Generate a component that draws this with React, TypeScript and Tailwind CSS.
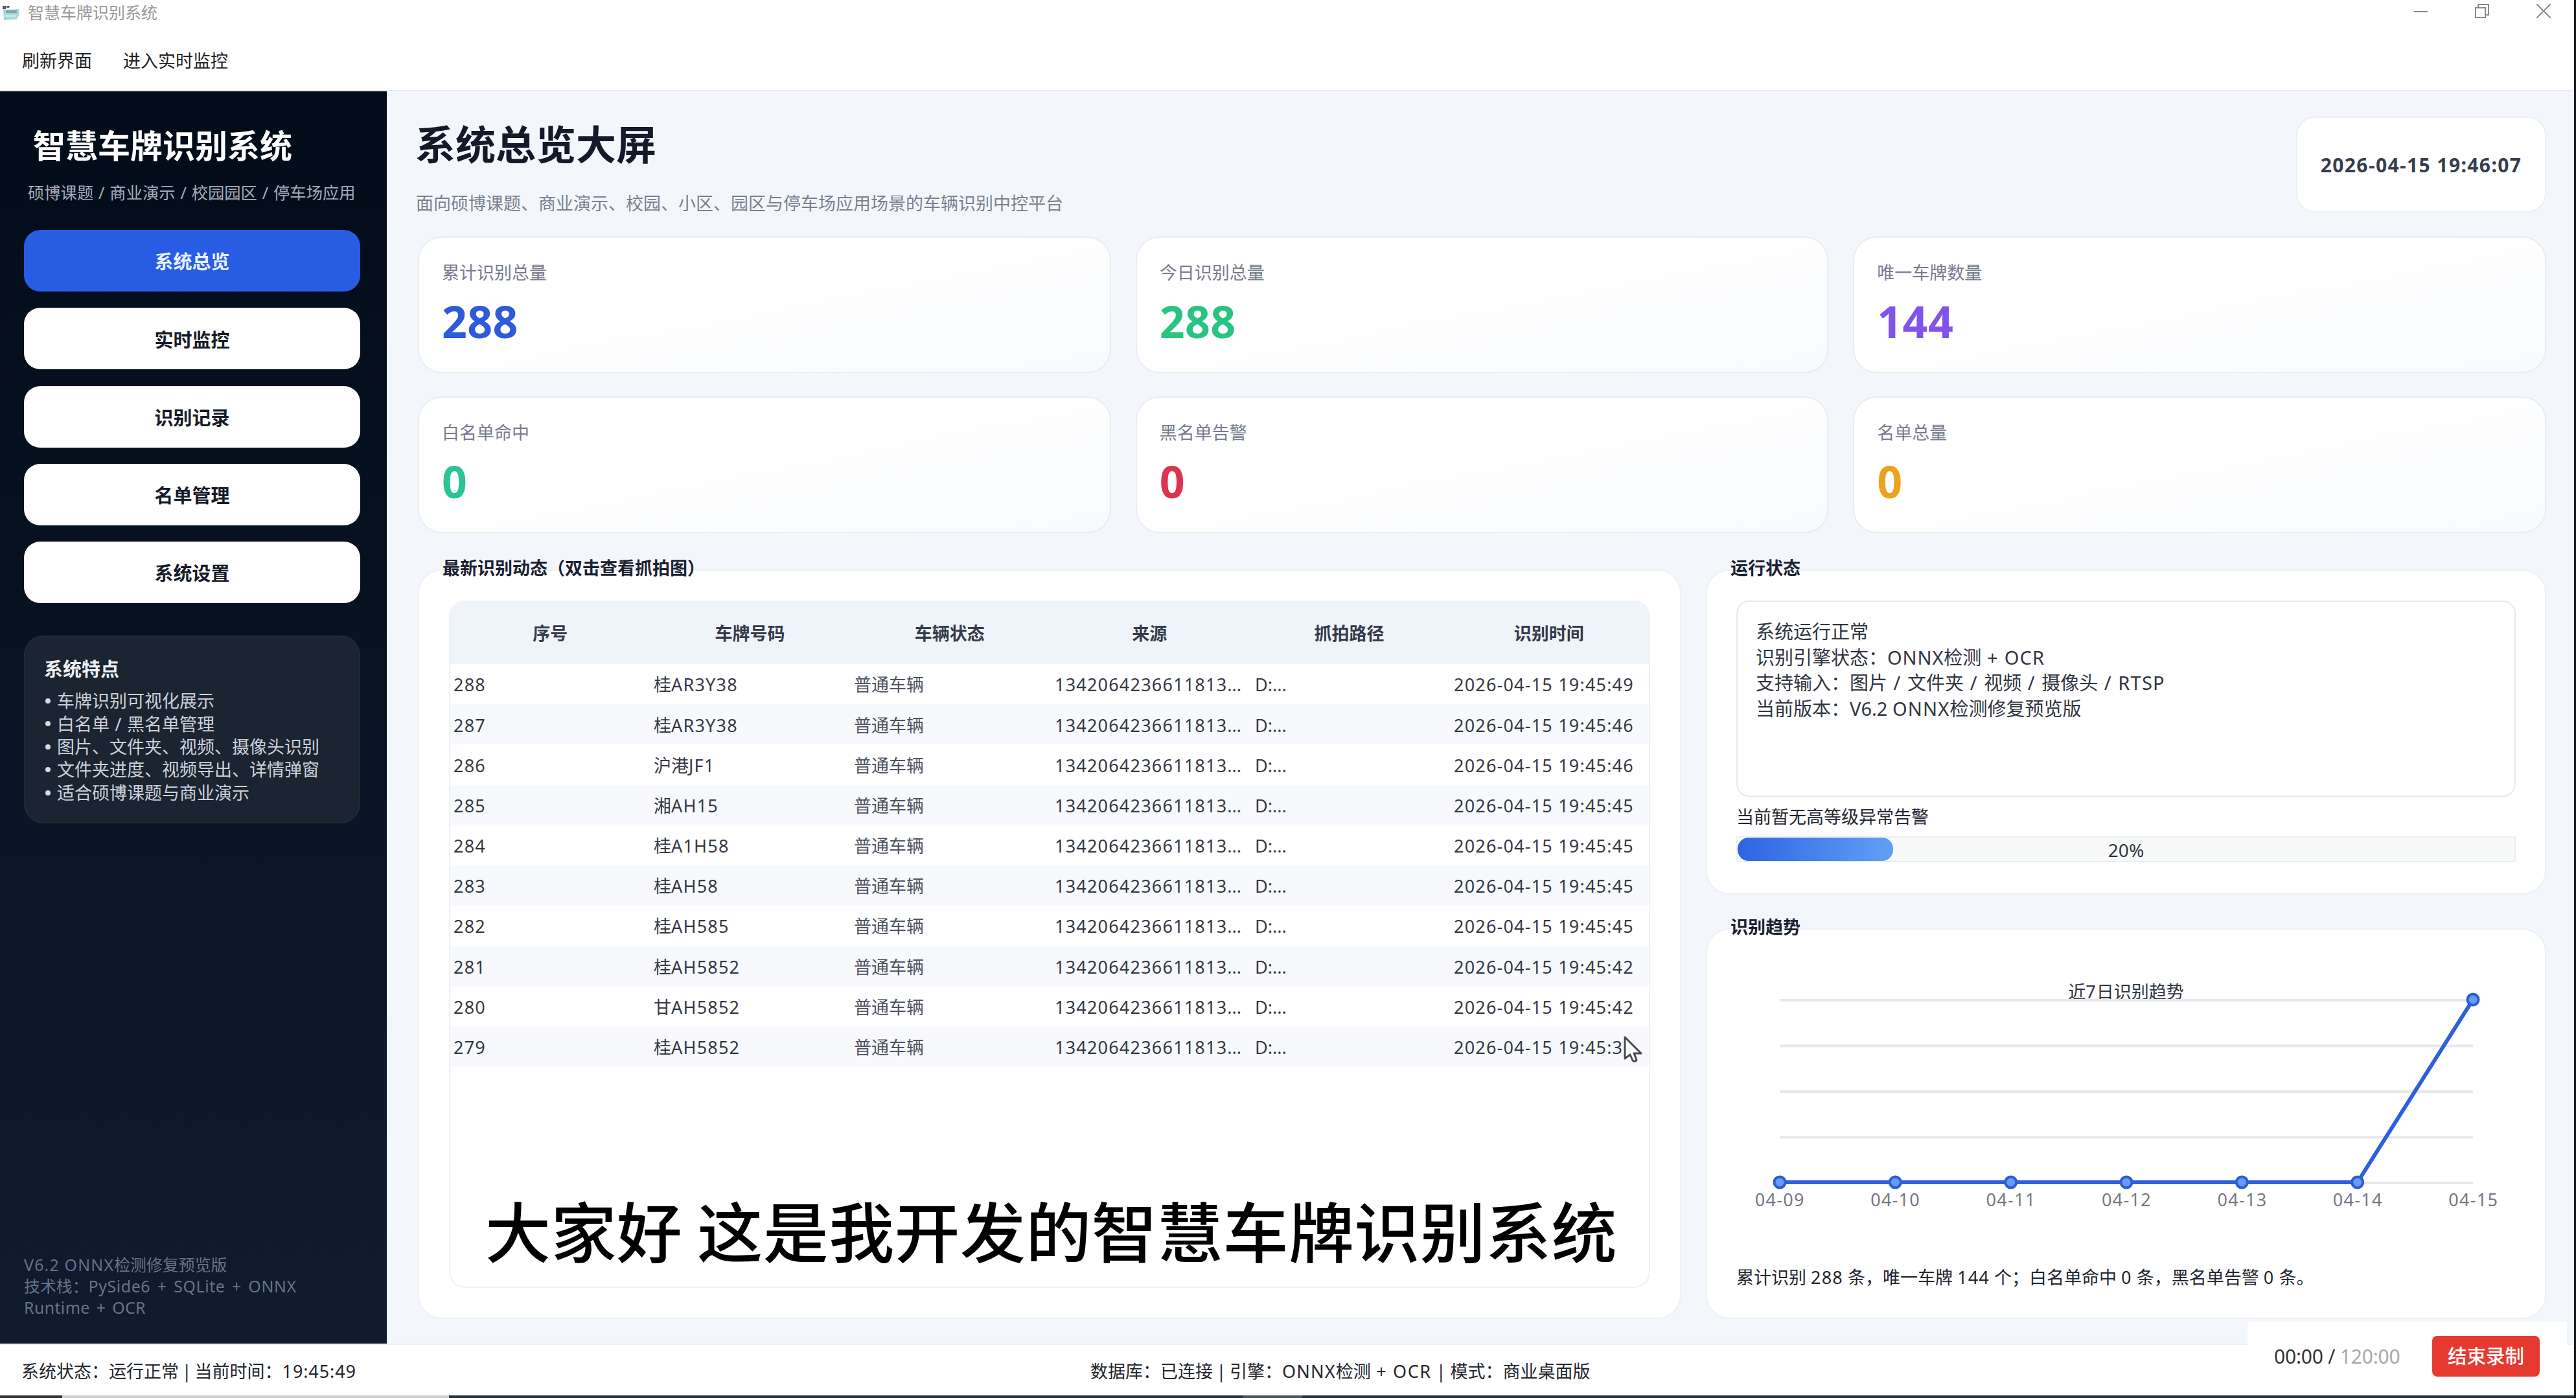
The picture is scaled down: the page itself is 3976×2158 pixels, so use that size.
import { ReactNode } from "react";
import clsx from "clsx";

const navItems = ["系统总览", "实时监控", "识别记录", "名单管理", "系统设置"];

const features = [
  "车牌识别可视化展示",
  "白名单 / 黑名单管理",
  "图片、文件夹、视频、摄像头识别",
  "文件夹进度、视频导出、详情弹窗",
  "适合硕博课题与商业演示",
];

const stats = [
  { label: "累计识别总量", value: "288", color: "text-[#2f5bdb]" },
  { label: "今日识别总量", value: "288", color: "text-[#27c580]" },
  { label: "唯一车牌数量", value: "144", color: "text-[#8253ea]" },
  { label: "白名单命中", value: "0", color: "text-[#2bc495]" },
  { label: "黑名单告警", value: "0", color: "text-[#dc3350]" },
  { label: "名单总量", value: "0", color: "text-[#eba21c]" },
];

const columns = ["序号", "车牌号码", "车辆状态", "来源", "抓拍路径", "识别时间"];

const records = [
  { id: 288, plate: "桂AR3Y38", time: "2026-04-15 19:45:49" },
  { id: 287, plate: "桂AR3Y38", time: "2026-04-15 19:45:46" },
  { id: 286, plate: "沪港JF1", time: "2026-04-15 19:45:46" },
  { id: 285, plate: "湘AH15", time: "2026-04-15 19:45:45" },
  { id: 284, plate: "桂A1H58", time: "2026-04-15 19:45:45" },
  { id: 283, plate: "桂AH58", time: "2026-04-15 19:45:45" },
  { id: 282, plate: "桂AH585", time: "2026-04-15 19:45:45" },
  { id: 281, plate: "桂AH5852", time: "2026-04-15 19:45:42" },
  { id: 280, plate: "甘AH5852", time: "2026-04-15 19:45:42" },
  { id: 279, plate: "桂AH5852", time: "2026-04-15 19:45:3" },
];

const trend = [
  { day: "04-09", count: 0 },
  { day: "04-10", count: 0 },
  { day: "04-11", count: 0 },
  { day: "04-12", count: 0 },
  { day: "04-13", count: 0 },
  { day: "04-14", count: 0 },
  { day: "04-15", count: 288 },
];

// Latin letters and digits run a little wider than the CJK text around them
function L({ children }: { children: ReactNode }) {
  return <span className="tracking-[1.2px]">{children}</span>;
}

function TitleBar() {
  return (
    <header className="flex h-[46px] shrink-0 items-start justify-between bg-white">
      <div className="flex h-[40px] items-center gap-[13px] pl-1">
        <svg className="h-6 w-[26px]" viewBox="0 0 26 24">
          <path d="M1 6l5 1 20-1-1 10-4 6-19 1z" fill="#a9d6d8" />
          <path d="M5 8h17v4H5z" fill="#86a5ab" />
          <path d="M4 15h17v3H4z" fill="#c6e8e8" />
          <path d="M0 1h5v5H0zM6 1h5l-1 3H6z" fill="#555c60" />
        </svg>
        <span className="text-[25px] text-[#989898]">智慧车牌识别系统</span>
      </div>
      <div className="flex items-center gap-[73px] pt-[6px] pr-[36px]">
        <svg className="h-[22px] w-[21px]" viewBox="0 0 21 22" fill="none" stroke="#8a8a8a" strokeWidth="2">
          <path d="M0 12h21" />
        </svg>
        <svg className="h-[22px] w-[22px]" viewBox="0 0 22 22" fill="none" stroke="#8a8a8a" strokeWidth="2">
          <path d="M1 6h15v15H1zM5 6V1h16v16h-5" />
        </svg>
        <svg className="h-[22px] w-[22px]" viewBox="0 0 22 22" fill="none" stroke="#8a8a8a" strokeWidth="2">
          <path d="M0 0l22 22M22 0L0 22" />
        </svg>
      </div>
    </header>
  );
}

function Sidebar() {
  return (
    <aside className="flex w-[597px] shrink-0 flex-col bg-gradient-to-b from-[#030c19] to-[#101b2d] px-[37px] pt-[48px]">
      <h1 className="pl-[14px] text-[50px] leading-[72px] font-bold text-white">智慧车牌识别系统</h1>
      <p className="mt-[18px] pl-[6px] text-[25.3px] leading-[36px] whitespace-nowrap text-[#a3aabd] [word-spacing:1.3px]">
        硕博课题 / 商业演示 / 校园园区 / 停车场应用
      </p>

      <nav className="mt-[40px] flex flex-col gap-[25.3px]">
        {navItems.map((item, i) => (
          <button
            key={item}
            className={clsx(
              "h-[95px] w-[519px] rounded-[25px] pt-[3px] text-[29px] font-bold",
              i === 0 ? "bg-[#285de3] text-[#e8f1ff]" : "bg-white text-[#161b27]"
            )}
          >
            {item}
          </button>
        ))}
      </nav>

      <div className="mt-[50px] h-[290px] w-[519px] rounded-[30px] border-2 border-[#202a37] bg-[#1b2431] px-[29px] pt-[29px]">
        <h2 className="text-[29px] leading-[42px] font-bold text-[#eef1f5]">系统特点</h2>
        <ul className="mt-[10px] text-[27px] leading-[35.4px] whitespace-nowrap text-[#cbd1db]">
          {features.map((f) => (
            <li key={f} className="flex items-center gap-[10px] [word-spacing:1.5px]">
              <span className="ml-[2px] size-[8px] rounded-full bg-[#d5dae2]" />
              {f}
            </li>
          ))}
        </ul>
      </div>

      <div className="mt-auto mb-[39px] text-[24.9px] leading-[33px] whitespace-nowrap text-[#64748b]">
        <p>
          <L>V6.2 ONNX</L>检测修复预览版
        </p>
        <p>
          技术栈：<span className="tracking-[0.6px] [word-spacing:3.5px]">PySide6 + SQLite + ONNX</span>
        </p>
        <p className="tracking-[0.4px] [word-spacing:3px]">Runtime + OCR</p>
      </div>
    </aside>
  );
}

function StatCard({ label, value, color }: (typeof stats)[0]) {
  return (
    <div className="h-[211px] rounded-[37px] border-2 border-[#e9edf3] bg-gradient-to-br from-white from-40% to-[#f8fafd] px-[35px] pt-[34px]">
      <p className="text-[27px] leading-[40px] text-[#777c8c]">{label}</p>
      <p className={clsx("mt-[7px] text-[68px] leading-[96px] font-bold tracking-[0.4px]", color)}>{value}</p>
    </div>
  );
}

function GroupBox({ title, className, children }: { title: string; className: string; children: ReactNode }) {
  return (
    <section className={clsx("flex flex-col", className)}>
      <h3 className="z-10 -mb-[23px] h-[40px] pl-[38px] text-[27px] leading-[34px] font-bold text-[#1b2130]">
        {title}
      </h3>
      <div className="mt-[2px] flex flex-1 flex-col rounded-[37px] border-2 border-[#edf0f5] bg-white">{children}</div>
    </section>
  );
}

function RecordTable() {
  return (
    <div className="mx-[46px] mt-[46px] mb-[46px] flex flex-1 flex-col overflow-hidden rounded-[25px] border-2 border-[#eff1f4]">
      <div className="grid h-[96px] grid-cols-6 items-center bg-[#eff3fa] pt-[2px] text-center text-[27px] text-[#343b4a]">
        {columns.map((c) => (
          <span key={c} className="font-bold">
            {c}
          </span>
        ))}
      </div>
      {records.map((r) => (
        <div
          key={r.id}
          className="grid h-[62.2px] grid-cols-[309px_309px_309px_309px_308px_1fr] items-center pt-[3px] text-[27px] whitespace-nowrap text-[#343944] even:bg-white odd:bg-[#f8f9fc]"
        >
          <span className="pl-[5px]">
            <L>{r.id}</L>
          </span>
          <span className="pl-[5px]">
            {r.plate.replace(/[A-Z0-9]+/, "")}
            <L>{r.plate.match(/[A-Z0-9]+/)?.[0]}</L>
          </span>
          <span className="pl-[5px] text-[#4f5462]">普通车辆</span>
          <span className="pl-[6px]">
            <L>1342064236611813</L>...
          </span>
          <span className="pl-[6px]">D:...</span>
          <span className="pl-[5px]">
            <L>{r.time}</L>
          </span>
        </div>
      ))}
    </div>
  );
}

const CHART_W = 1092;
const CHART_H = 304;
const PAD = 11;

function TrendChart() {
  const max = Math.max(...trend.map((t) => t.count));
  const stepX = (CHART_W - PAD * 2) / (trend.length - 1);
  const plotH = CHART_H - PAD * 2;
  const points = trend.map((t, i) => ({
    x: PAD + i * stepX,
    y: PAD + plotH - (t.count / max) * plotH,
  }));

  return (
    <svg className="block h-[304px] w-[1092px]" viewBox="0 0 1092 304">
      {[0, 1, 2, 3, 4].map((i) => (
        <line
          key={i}
          x1={PAD}
          x2={CHART_W - PAD}
          y1={PAD + 1 + (plotH / 4) * i}
          y2={PAD + 1 + (plotH / 4) * i}
          stroke="#e6e8eb"
          strokeWidth="4"
        />
      ))}
      <polyline
        points={points.map((p) => `${p.x},${p.y}`).join(" ")}
        fill="none"
        stroke="#2f5fdc"
        strokeWidth="6"
      />
      {points.map((p) => (
        <circle key={p.x} cx={p.x} cy={p.y} r="8.5" fill="#639df5" stroke="#2f5bd3" strokeWidth="4" />
      ))}
    </svg>
  );
}

function StatusPanel() {
  return (
    <GroupBox title="运行状态" className="h-[521px]">
      <div className="mx-[45px] mt-[46px] h-[303px] rounded-[20px] border-2 border-[#e6e8ec] px-[28px] pt-[26px] text-[29px] leading-[39.6px] whitespace-nowrap text-[#30353f]">
        <p>系统运行正常</p>
        <p>
          识别引擎状态：<span className="tracking-[0.9px]">ONNX</span>检测<L> + OCR</L>
        </p>
        <p className="[word-spacing:0.8px]">
          支持输入：图片<L> / </L>文件夹<L> / </L>视频<L> / </L>摄像头<L> / RTSP</L>
        </p>
        <p>
          当前版本：V6.2 <L>ONNX</L>检测修复预览版
        </p>
      </div>
      <p className="mx-[45px] mt-[11px] text-[27px] leading-[40px] text-[#22262e]">当前暂无高等级异常告警</p>
      <div className="relative mx-[45px] mt-[10px] flex h-[40px] items-center justify-center border-2 border-[#eceeef] bg-[#f8f9f9]">
        <div className="absolute inset-y-0 left-0 w-1/5 rounded-[17px] bg-gradient-to-r from-[#2f63e2] to-[#62a0f6]" />
        <span className="pt-[1px] text-[28px] text-[#30353f]">20%</span>
      </div>
    </GroupBox>
  );
}

function TrendPanel() {
  return (
    <GroupBox title="识别趋势" className="flex-1">
      <p className="mt-[76px] -mb-[19px] text-center text-[27px] leading-[40px] text-[#30353f]">
        近<L>7</L>日识别趋势
      </p>
      <div className="mx-auto">
        <TrendChart />
      </div>
      <div className="mx-auto -mt-[2px] flex w-[1249px] text-center text-[27px] leading-[36px] text-[#747884]">
        {trend.map((t) => (
          <span key={t.day} className="flex-1 pl-[2px] tracking-[1.3px]">
            {t.day}
          </span>
        ))}
      </div>
      <p className="mt-auto mb-[42px] pl-[45px] text-[27px] leading-[40px] whitespace-nowrap text-[#22262e]">
        累计识别 <L>288</L> 条，唯一车牌 <L>144</L> 个；白名单命中 <L>0</L> 条，黑名单告警 <L>0</L> 条。
      </p>
    </GroupBox>
  );
}

function StatusBar() {
  return (
    <footer className="grid h-[80px] shrink-0 grid-cols-[1683px_1fr] items-center border-t-2 border-[#eef1f5] bg-white pt-[4px] text-[27px] whitespace-nowrap text-[#22262e]">
      <span className="pl-[33px] [word-spacing:-2.2px]">
        系统状态：运行正常 | 当前时间：<span className="tracking-[0.9px]">19:45:49</span>
      </span>
      <span>
        数据库：已连接<span className="[word-spacing:-1.5px]"> | </span>引擎：<L>ONNX</L>检测
        <span className="tracking-[1.6px]"> + OCR</span> | 模式：商业桌面版
      </span>
    </footer>
  );
}

function Recorder() {
  return (
    <div className="absolute top-[2040px] left-[3469px] flex h-[104px] w-[493px] items-center rounded-[4px] bg-white pt-[3px] pl-[41px] whitespace-nowrap">
      <span className="w-[244px] text-[30px] tracking-[-0.2px] text-[#333]">
        00:00 / <span className="text-[#a9a9a9]">120:00</span>
      </span>
      <button className="h-[63px] w-[166px] rounded-[8px] bg-[#e63a31] text-[29.5px] font-medium text-white">
        结束录制
      </button>
    </div>
  );
}

export default function App() {
  return (
    <div className="relative flex h-[2158px] w-[3976px] overflow-hidden bg-[#16181c] font-['Noto_Sans','Noto_Sans_CJK_SC',sans-serif]">
      <div className="flex w-[3973px] flex-col">
        <TitleBar />
        <div className="flex h-[95px] shrink-0 items-center gap-[48px] border-b-2 border-[#e9ebef] bg-white pt-[3px] pl-[34px] text-[27px] text-[#1f1f1f]">
          <span>刷新界面</span>
          <span>进入实时监控</span>
        </div>

        <div className="flex min-h-0 flex-1">
          <Sidebar />
          <main className="flex flex-1 flex-col bg-[#f3f6fb] pr-[43px] pb-[38px] pl-[48px]">
            <div className="flex h-[224px] justify-between pt-[37px]">
              <div className="-ml-[4px]">
                <h2 className="text-[62px] leading-[90px] font-bold text-[#141a2a]">系统总览大屏</h2>
                <p className="mt-[26px] pl-[1px] text-[27px] leading-[40px] text-[#7b8090]">
                  面向硕博课题、商业演示、校园、小区、园区与停车场应用场景的车辆识别中控平台
                </p>
              </div>
              <div className="mt-[2px] flex h-[148px] w-[386px] items-center justify-center rounded-[29px] border-2 border-[#eceff4] bg-white text-[30px] font-bold tracking-[1.4px] whitespace-nowrap text-[#363e4d]">
                2026-04-15 19:46:07
              </div>
            </div>

            <div className="grid grid-cols-3 gap-x-[38px] gap-y-[36px]">
              {stats.map((s) => (
                <StatCard key={s.label} {...s} />
              ))}
            </div>

            <div className="mt-[37px] flex min-h-0 flex-1 gap-[38px]">
              <GroupBox title="最新识别动态（双击查看抓拍图）" className="w-[1950px]">
                <RecordTable />
              </GroupBox>
              <div className="flex flex-1 flex-col gap-[33px]">
                <StatusPanel />
                <TrendPanel />
              </div>
            </div>
          </main>
        </div>

        <StatusBar />
        <div className="flex h-[4px] shrink-0">
          <div className="w-[96px] bg-[#333]" />
          <div className="w-[597px] bg-[#cfcfcf]" />
          <div className="w-[1225px] bg-[#27323a]" />
          <div className="w-[92px] bg-[#4a555c]" />
          <div className="flex-1 bg-[#27323a]" />
        </div>
      </div>

      <Recorder />

      {/* video subtitle */}
      <p className="absolute top-[1822px] left-[749px] text-[101px] leading-[150px] font-medium tracking-[0.4px] whitespace-nowrap text-black font-['Noto_Sans_CJK_SC',sans-serif]">
        大家好 这是我开发的智慧车牌识别系统
      </p>

      {/* mouse pointer */}
      <svg className="absolute top-[1599px] left-[2506px] h-[42px] w-[29px]" viewBox="0 0 29 42">
        <path
          d="M2 2v33l8-6 4 9q4 3 6-1l-4-10h11z"
          fill="#fff"
          stroke="#4a4a4a"
          strokeWidth="3"
          strokeLinejoin="round"
        />
      </svg>
    </div>
  );
}
